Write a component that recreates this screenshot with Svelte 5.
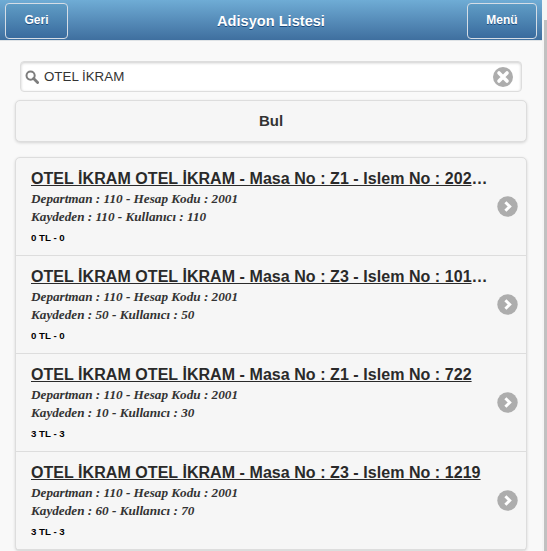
<script>
  const rows = [
    { title: 'OTEL İKRAM OTEL İKRAM - Masa No : Z1 - Islem No : 202134', a: 'Departman : 110 - Hesap Kodu : 2001', b: 'Kaydeden : 110 - Kullanıcı : 110', c: '0 TL - 0' },
    { title: 'OTEL İKRAM OTEL İKRAM - Masa No : Z3 - Islem No : 101422', a: 'Departman : 110 - Hesap Kodu : 2001', b: 'Kaydeden : 50 - Kullanıcı : 50', c: '0 TL - 0' },
    { title: 'OTEL İKRAM OTEL İKRAM - Masa No : Z1 - Islem No : 722', a: 'Departman : 110 - Hesap Kodu : 2001', b: 'Kaydeden : 10 - Kullanıcı : 30', c: '3 TL - 3' },
    { title: 'OTEL İKRAM OTEL İKRAM - Masa No : Z3 - Islem No : 1219', a: 'Departman : 110 - Hesap Kodu : 2001', b: 'Kaydeden : 60 - Kullanıcı : 70', c: '3 TL - 3' }
  ];
</script>

<div class="screen">
  <div class="page">
    <header class="bar">
      <div class="side"><button class="hbtn back">Geri</button></div>
      <h1>Adisyon Listesi</h1>
      <div class="side end"><button class="hbtn menu">Menü</button></div>
    </header>
    <main class="content">
      <div class="search">
        <svg class="mag" width="14" height="14" viewBox="0 0 14 14"><circle cx="5.6" cy="5.6" r="4.1" fill="none" stroke="#7d7d7d" stroke-width="2"/><path d="M8.6 8.6 L12.6 12.6" stroke="#7d7d7d" stroke-width="2.8" stroke-linecap="round"/></svg>
        <span class="val">OTEL İKRAM</span>
        <svg class="clear" width="20" height="20" viewBox="0 0 20 20"><circle cx="10" cy="10" r="10" fill="#adadad"/><path d="M6 6 L14 14 M14 6 L6 14" stroke="#fff" stroke-width="3.6" stroke-linecap="round"/></svg>
      </div>
      <button class="find">Bul</button>
      <ul class="list">
        {#each rows as r}
          <li class="row">
            <div class="text">
              <h2>{r.title}</h2>
              <p class="it">{r.a}</p>
              <p class="it">{r.b}</p>
              <p class="sm">{r.c}</p>
            </div>
            <svg class="go" width="21" height="21" viewBox="0 0 21 21"><circle cx="10.5" cy="10.5" r="10.2" fill="#adadad"/><path d="M8.4 6.2 L12.7 10.5 L8.4 14.8" fill="none" stroke="#fff" stroke-width="3"/></svg>
          </li>
        {/each}
      </ul>
    </main>
  </div>
  <div class="scroll"><div class="thumb"></div></div>
</div>

<style>
  :global(body) { margin: 0; overflow: hidden; background: #f9f9f9; }
  .screen { display: flex; width: 547px; height: 551px; overflow: hidden; font-family: "Liberation Sans", Arial, sans-serif; }
  .page { width: 542px; flex: none; background: #f9f9f9; }
  .scroll { flex: 1; background: #f5f5f5; padding: 20px 0 0 2px; }
  .thumb { height: 531px; background: #c1c1c1; }
  .bar { height: 41px; box-sizing: border-box; display: grid; grid-template-columns: 1fr auto 1fr; align-items: center; padding: 3px 5px 1px; background: linear-gradient(#6facd5, #3f6f9f); border-bottom: 1px solid #dfe3e6; }
  .side { display: flex; }
  .end { justify-content: flex-end; }
  .bar h1 { margin: 0; font-size: 14.6px; font-weight: bold; color: #fff; text-shadow: 0 1px 0 #194b7e; }
  .hbtn { height: 36px; box-sizing: border-box; border: 1px solid #d5dde6; border-radius: 4px; background: linear-gradient(#5f9cc5, #396b9e); color: #fff; font: bold 12px "Liberation Sans", Arial, sans-serif; text-shadow: 0 1px 0 #194b7e; padding: 0 0 2px; }
  .back { width: 63px; }
  .menu { width: 70px; }
  .content { padding: 20px 15px 0; }
  .search { margin: 0 5px; height: 31px; box-sizing: border-box; display: flex; align-items: center; background: #fff; border: 1px solid #ddd; border-radius: 4px; box-shadow: inset 0 1px 3px rgba(0,0,0,.2); padding: 0 8px 0 4px; }
  .mag { flex: none; margin-right: 5px; }
  .val { flex: 1; font-size: 13.33px; color: #333; }
  .clear { flex: none; }
  .find { display: block; width: 100%; height: 42px; margin-top: 8px; box-sizing: border-box; border: 1px solid #ddd; border-radius: 5px; background: #f6f6f6; box-shadow: 0 1px 3px rgba(0,0,0,.15); font: bold 15px "Liberation Sans", Arial, sans-serif; color: #333; padding: 0 0 2px; }
  .list { list-style: none; margin: 15px 0 0; padding: 0; border: 1px solid #ddd; border-radius: 5px; background: #f6f6f6; box-shadow: 0 1px 3px rgba(0,0,0,.15); }
  .row { display: flex; align-items: center; height: 98px; box-sizing: border-box; padding: 0 8px 0 15px; border-bottom: 1px solid #ddd; }
  .text { flex: 1; min-width: 0; align-self: flex-start; padding-top: 12px; }
  h2 { margin: 0 0 2px; font-size: 16px; letter-spacing: .055px; line-height: 18px; font-weight: bold; color: #2a2a2a; text-decoration: underline; white-space: nowrap; overflow: hidden; text-overflow: ellipsis; }
  .it { margin: 0; font: italic bold 13.2px/18px "Liberation Serif", "Times New Roman", serif; color: #333; }
  .sm { margin: 5px 0 0; font-size: 9.7px; font-weight: bold; line-height: 14px; color: #000; }
  .go { flex: none; margin: 0 0 1px 7px; }
</style>
